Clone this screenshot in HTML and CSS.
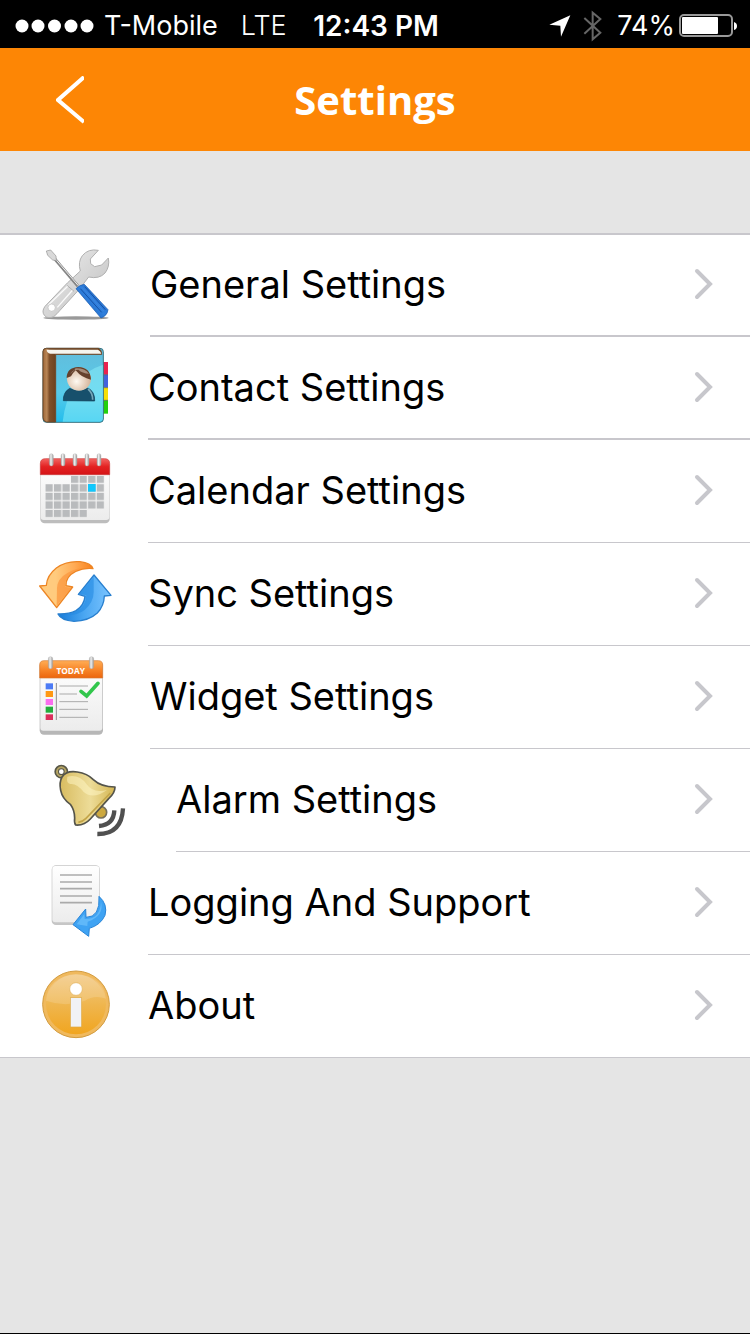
FILE: index.html
```html
<!DOCTYPE html>
<html lang="en">
    <head>
        <title>Settings</title>
        <meta charset="UTF-8">
        <meta name="viewport" content="width=device-width">
        <link rel="stylesheet" href="styles.css">
    </head>
    <body>
        <div class="status">
            <div class="carrier">
                <svg class="signal" viewBox="0 0 80 14" aria-hidden="true">
                    <circle cx="7" cy="7" r="6.5"/>
                    <circle cx="23" cy="7" r="6.5"/>
                    <circle cx="39.500" cy="7" r="6.5"/>
                    <circle cx="56" cy="7" r="6.5"/>
                    <circle cx="72" cy="7" r="6.5"/>
                </svg>
                <span>T-Mobile</span>
                <span class="network">LTE</span>
            </div>
            <div class="time">12:43 PM</div>
            <div class="power">
                <svg class="location" viewBox="0 0 66 66" aria-hidden="true">
                    <path d="M64 1 L36 65 L34 32 L1 29 Z"/>
                </svg>
                <svg class="bluetooth" viewBox="0 0 60 96" aria-hidden="true">
                    <path d="M4 24 L52 68 L29 88 V8 L52 27 L4 71"/>
                </svg>
                <span class="percent">74%</span>
                <svg class="battery" viewBox="0 0 58 24" aria-hidden="true">
                    <rect class="case" x="1" y="1" width="52" height="21" rx="4"/>
                    <rect x="3" y="3" width="36" height="17" rx="1"/>
                    <path d="M55 8 q3 1 3 4 q0 3 -3 4 Z"/>
                </svg>
            </div>
        </div>
        <header class="bar">
            <button class="back" type="button" aria-label="Back">
                <svg viewBox="0 0 28 48" aria-hidden="true"><path d="M28 1 L2 24 L28 46"/></svg>
            </button>
            <h1>Settings</h1>
        </header>
        <nav class="list">
            <a class="row wide" href="#general">
                <!-- wrench and screwdriver -->
                <svg class="icon" viewBox="0 -3 300 300" aria-hidden="true">
                    <defs>
                        <linearGradient id="steel" x1="0" y1="0" x2="1" y2="1">
                            <stop offset="0" stop-color="#f0f0f0"/>
                            <stop offset="1" stop-color="#bcbcbc"/>
                        </linearGradient>
                        <linearGradient id="handle" x1="0" y1="1" x2="1" y2="0">
                            <stop offset="0" stop-color="#0f57b4"/>
                            <stop offset=".5" stop-color="#2f7fdc"/>
                            <stop offset="1" stop-color="#1a63c2"/>
                        </linearGradient>
                    </defs>
                    <ellipse cx="138" cy="246" rx="98" ry="5" fill="#999"/>
                    <path d="M205 43 Q175 37 157 59 Q143 78 151 105 L112 141 L45 211 Q34 226 43 238 Q53 250 71 242 Q81 234 90 223 L145 163 L176 123 Q208 130 225 111 Q240 92 235 66 L215 87 L194 92 L182 83 L181 69 Z" fill="url(#steel)" stroke="#b0b0b0" stroke-width="3" stroke-linejoin="round"/>
                    <path d="M114 150 L55 207 M128 162 L82 214" fill="none" stroke="#fafafa" stroke-width="4"/>
                    <path d="M111 148 L132 166" stroke="#999" stroke-width="2"/>
                    <circle cx="65" cy="215" r="11" fill="#fff" stroke="#bbb" stroke-width="2"/>
                    <path d="M72 66 L144 151" stroke="#858585" stroke-width="9"/>
                    <path d="M72 64 L145 149" stroke="#eee" stroke-width="3"/>
                    <path d="M49 45 L62 42 L78 60 L79 74 L68 72 L53 58 Z" fill="#d9d9d9" stroke="#929292" stroke-width="2"/>
                    <path d="M138 158 Q150 146 163 145 L234 221 Q232 239 213 246 Z" fill="url(#handle)" stroke="#1557ad" stroke-width="2"/>
                    <path d="M151 158 L215 229 M164 152 L226 221" stroke="#1550a6" stroke-width="3"/>
                    <path d="M156 154 L221 225" stroke="#4088e0" stroke-width="3"/>
                </svg>
                <span class="label">General Settings</span>
                <svg class="chevron" viewBox="0 0 20 32" aria-hidden="true"><path d="M3 3 L16 16 L3 29"/></svg>
            </a>
            <a class="row" href="#contact">
                <!-- address book -->
                <svg class="icon" viewBox="0 -3 300 300" aria-hidden="true">
                    <defs>
                        <linearGradient id="cover" x1="0" y1="0" x2="0" y2="1">
                            <stop offset="0" stop-color="#62bcdb"/>
                            <stop offset=".6" stop-color="#58cbea"/>
                            <stop offset="1" stop-color="#22bdec"/>
                        </linearGradient>
                        <linearGradient id="spine" x1="39" y1="0" x2="77" y2="0" gradientUnits="userSpaceOnUse">
                            <stop offset="0" stop-color="#a0693a"/>
                            <stop offset=".3" stop-color="#b98656"/>
                            <stop offset=".5" stop-color="#80502a"/>
                            <stop offset="1" stop-color="#6c421f"/>
                        </linearGradient>
                        <radialGradient id="face" cx=".4" cy=".6" r=".7">
                            <stop offset="0" stop-color="#fffaf2"/>
                            <stop offset="1" stop-color="#cda789"/>
                        </radialGradient>
                    </defs>
                    <rect x="216" y="72" width="18" height="38" fill="#e9234f"/>
                    <rect x="216" y="110" width="18" height="39" fill="#4362dc"/>
                    <rect x="216" y="149" width="18" height="38" fill="#f6df06"/>
                    <rect x="216" y="187" width="18" height="40" fill="#24cf0d"/>
                    <path d="M219 110 H234 M219 149 H234 M219 187 H234" stroke="#555" stroke-width="2"/>
                    <rect x="39" y="31" width="181" height="222" rx="10" fill="url(#cover)" stroke="#3d7481" stroke-width="3"/>
                    <path d="M219 80 Q114 113 98 251 H209 Q219 250 219 240 Z" fill="#8df0fa" opacity=".5"/>
                    <path d="M39 40 Q39 31 50 31 H206 Q215 36 215 49 H77 V252 H50 Q39 250 39 238 Z" fill="url(#spine)" stroke="#714929" stroke-width="3"/>
                    <path d="M50 35 H204 Q212 40 214 47 H61 Q50 44 50 35 Z" fill="#f6f5ef"/>
                    <path d="M100 188 Q99 163 119 151 Q147 165 174 150 Q195 161 194 189 Z" fill="#17506c" stroke="#124057" stroke-width="2"/>
                    <path d="M174 153 Q188 164 188 185" fill="none" stroke="#76a6b6" stroke-width="5"/>
                    <ellipse cx="147" cy="123" rx="36" ry="35" fill="url(#face)"/>
                    <path d="M110 120 Q110 89 145 87 Q181 88 183 125 Q155 120 137 97 Q127 106 123 115 Z" fill="#65412c"/>
                    <path d="M120 109 Q126 98 134 95 Q134 91 140 91 Q165 91 177 107 Q157 106 145 95 L133 97 Z" fill="#a58b78"/>
                </svg>
                <span class="label">Contact Settings</span>
                <svg class="chevron" viewBox="0 0 20 32" aria-hidden="true"><path d="M3 3 L16 16 L3 29"/></svg>
            </a>
            <a class="row" href="#calendar">
                <!-- month calendar -->
                <svg class="icon" viewBox="0 0 300 300" aria-hidden="true">
                    <defs>
                        <linearGradient id="red" x1="0" y1="0" x2="0" y2="1">
                            <stop offset="0" stop-color="#f36461"/>
                            <stop offset=".5" stop-color="#e32222"/>
                            <stop offset="1" stop-color="#d51316"/>
                        </linearGradient>
                        <linearGradient id="paper" x1="0" y1="0" x2="0" y2="1">
                            <stop offset="0" stop-color="#ffffff"/>
                            <stop offset="1" stop-color="#ececec"/>
                        </linearGradient>
                        <linearGradient id="ring" x1="0" y1="0" x2="1" y2="0">
                            <stop offset="0" stop-color="#a9a9a9"/>
                            <stop offset=".4" stop-color="#efefef"/>
                            <stop offset="1" stop-color="#999"/>
                        </linearGradient>
                        <pattern id="days" x="46" y="107" width="25.700" height="25.700" patternUnits="userSpaceOnUse">
                            <rect width="22" height="22" fill="#b9bbbd"/>
                        </pattern>
                    </defs>
                    <rect x="31" y="62" width="208" height="188" rx="13" fill="#bdbdbd"/>
                    <rect x="32" y="64" width="206" height="176" rx="9" fill="url(#paper)"/>
                    <path d="M31 104 V71 Q31 56 46 56 H224 Q239 56 239 71 V104 Z" fill="url(#red)" stroke="#cb3b3b" stroke-width="2"/>
                    <path d="M122 107 H223 V206 H171 V232 H46 V132 H122 Z" fill="url(#days)"/>
                    <rect x="174" y="132" width="23" height="23" fill="#10c7fc"/>
                    <g fill="url(#ring)" stroke="#aaa">
                        <rect x="58" y="41" width="12" height="37" rx="6"/>
                        <rect x="93" y="41" width="12" height="37" rx="6"/>
                        <rect x="129" y="41" width="12" height="37" rx="6"/>
                        <rect x="165" y="41" width="12" height="37" rx="6"/>
                        <rect x="201" y="41" width="12" height="37" rx="6"/>
                    </g>
                </svg>
                <span class="label">Calendar Settings</span>
                <svg class="chevron" viewBox="0 0 20 32" aria-hidden="true"><path d="M3 3 L16 16 L3 29"/></svg>
            </a>
            <a class="row" href="#sync">
                <!-- two turning arrows -->
                <svg class="icon" viewBox="0 -6 300 300" aria-hidden="true">
                    <defs>
                        <linearGradient id="warm" x1="0" y1="0" x2="1" y2="0">
                            <stop offset=".3" stop-color="#ffcb7e"/>
                            <stop offset=".65" stop-color="#ffab55"/>
                            <stop offset="1" stop-color="#f98019"/>
                        </linearGradient>
                        <linearGradient id="cool" x1="0" y1="0" x2="1" y2="0">
                            <stop offset="0" stop-color="#177bd9"/>
                            <stop offset=".5" stop-color="#4ba7f2"/>
                            <stop offset="1" stop-color="#7bc4ff"/>
                        </linearGradient>
                    </defs>
                    <path d="M189 71 Q183 54 150 50 Q108 47 79 69 Q51 91 49 121 L29 123 L80 188 L128 126 L108 122 Q107 94 137 79 Q162 68 189 71 Z" fill="url(#warm)" stroke="#ed8524" stroke-width="4" stroke-linejoin="round"/>
                    <path d="M187 69 Q143 65 112 84 Q82 101 81 129 L80 183 L123 129 L105 125 Q104 94 136 77 Q161 66 187 69 Z" fill="#fb963d" opacity=".7"/>
                    <path d="M84 207 Q93 226 132 229 Q176 228 202 204 Q222 183 223 153 L243 151 L192 90 L145 148 L165 154 Q162 182 138 197 Q117 208 84 207 Z" fill="url(#cool)" stroke="#287fcf" stroke-width="4" stroke-linejoin="round"/>
                    <path d="M88 209 Q134 217 164 195 Q191 171 191 142 V96 L149 146 L169 151 Q167 185 140 199 Q120 210 88 209 Z" fill="#248ae2" opacity=".6"/>
                </svg>
                <span class="label">Sync Settings</span>
                <svg class="chevron" viewBox="0 0 20 32" aria-hidden="true"><path d="M3 3 L16 16 L3 29"/></svg>
            </a>
            <a class="row wide" href="#widget">
                <!-- today list -->
                <svg class="icon" viewBox="0 -6 300 300">
                    <defs>
                        <linearGradient id="orange" x1="0" y1="0" x2="0" y2="1">
                            <stop offset="0" stop-color="#ffad55"/>
                            <stop offset=".5" stop-color="#f8872b"/>
                            <stop offset="1" stop-color="#ec650d"/>
                        </linearGradient>
                    </defs>
                    <rect x="29" y="41" width="190" height="219" rx="13" fill="#b7b7b7"/>
                    <rect x="31" y="43" width="186" height="205" rx="9" fill="url(#paper)"/>
                    <path d="M29 90 V51 Q29 38 42 38 H205 Q218 38 218 51 V90 Z" fill="url(#orange)" stroke="#d67a34" stroke-width="2"/>
                    <g fill="url(#ring)" stroke="#aaa">
                        <rect x="55" y="26" width="13" height="36" rx="6"/>
                        <rect x="178" y="26" width="13" height="36" rx="6"/>
                    </g>
                    <text class="today" x="122" y="79" text-anchor="middle">TODAY</text>
                    <rect x="47" y="106" width="22" height="18" fill="#4c7bf5"/>
                    <rect x="47" y="129" width="22" height="18" fill="#ff9813"/>
                    <rect x="47" y="153" width="22" height="18" fill="#fa6eee"/>
                    <rect x="47" y="176" width="22" height="18" fill="#22ad3b"/>
                    <rect x="47" y="199" width="22" height="17" fill="#db2d5c"/>
                    <path d="M79 105 V216" stroke="#8d8d8d" stroke-width="3"/>
                    <path d="M88 114 H174 M88 138 H141 M88 161 H174 M88 184 H174 M88 208 H174" stroke="#aaa" stroke-width="3"/>
                    <path d="M153 130 L170 144 L204 106" fill="none" stroke="#32c64c" stroke-width="11" stroke-linecap="round"/>
                </svg>
                <span class="label">Widget Settings</span>
                <svg class="chevron" viewBox="0 0 20 32" aria-hidden="true"><path d="M3 3 L16 16 L3 29"/></svg>
            </a>
            <a class="row alarm" href="#alarm">
                <!-- ringing bell -->
                <svg class="icon" viewBox="-30 -6 300 300" aria-hidden="true">
                    <defs>
                        <linearGradient id="brass" x1="0" y1="0" x2="1" y2="0">
                            <stop offset="0" stop-color="#d8bc60"/>
                            <stop offset=".55" stop-color="#eddc98"/>
                            <stop offset="1" stop-color="#d4b653"/>
                        </linearGradient>
                    </defs>
                    <circle cx="64" cy="62" r="14" fill="none" stroke="#575646" stroke-width="14"/>
                    <circle cx="64" cy="62" r="13" fill="none" stroke="#b5a463" stroke-width="6"/>
                    <circle cx="183" cy="184" r="17" fill="#cda93f" stroke="#77705a" stroke-width="5"/>
                    <path d="M66 78 Q79 58 112 63 Q142 67 160 86 Q183 108 225 108 Q225 126 206 143 L151 204 Q133 224 107 222 Q102 215 104 201 Q104 178 91 160 Q67 143 62 118 Q57 94 66 78 Z" fill="url(#brass)" stroke="#54544b" stroke-width="5" stroke-linejoin="round"/>
                    <path d="M82 77 Q118 69 140 100 Q159 128 201 117 Q159 147 131 123 Q111 97 91 99 Q78 96 82 77 Z" fill="#fff7c8" opacity=".5"/>
                    <path d="M211 126 L138 202 Q128 212 115 214" fill="none" stroke="#c4a548" stroke-width="5"/>
                    <path d="M177 225 Q221 221 223 178 M172 249 Q245 250 249 172" fill="none" stroke="#505050" stroke-width="13"/>
                </svg>
                <span class="label">Alarm Settings</span>
                <svg class="chevron" viewBox="0 0 20 32" aria-hidden="true"><path d="M3 3 L16 16 L3 29"/></svg>
            </a>
            <a class="row" href="#logging">
                <!-- page with an arrow -->
                <svg class="icon" viewBox="0 -9 300 300" aria-hidden="true">
                    <rect x="65" y="31" width="145" height="179" rx="13" fill="#c6c6c6"/>
                    <rect x="67" y="33" width="141" height="169" rx="9" fill="url(#paper)"/>
                    <path d="M90 60 H186 M90 81 H186 M90 101 H186 M90 123 H186 M90 143 H186" stroke="#aaa" stroke-width="5"/>
                    <path d="M207 124 Q234 148 225 181 Q212 210 178 220 L176 244 L129 209 L167 162 L168 187 Q211 187 207 124 Z" fill="#3fa3f3" stroke="#2784d8" stroke-width="3" stroke-linejoin="round"/>
                    <path d="M213 140 Q224 182 173 200 L172 213 L140 208 L163 177 L164 192 Q211 193 213 140 Z" fill="#6fc0fb" opacity=".7"/>
                </svg>
                <span class="label">Logging And Support</span>
                <svg class="chevron" viewBox="0 0 20 32" aria-hidden="true"><path d="M3 3 L16 16 L3 29"/></svg>
            </a>
            <a class="row" href="#about">
                <!-- info badge -->
                <svg class="icon" viewBox="0 -9 300 300" aria-hidden="true">
                    <defs>
                        <linearGradient id="amber" x1="0" y1="0" x2="0" y2="1">
                            <stop offset="0" stop-color="#f2c984"/>
                            <stop offset=".5" stop-color="#efb64f"/>
                            <stop offset="1" stop-color="#f1a51f"/>
                        </linearGradient>
                    </defs>
                    <circle cx="138" cy="139" r="100" fill="#f0b95d" stroke="#d29b3f" stroke-width="3"/>
                    <circle cx="138" cy="139" r="90" fill="url(#amber)"/>
                    <path d="M48 128 Q54 56 138 49 Q220 54 228 122 Q193 110 165 128 Q108 149 48 128 Z" fill="#fff" opacity=".15"/>
                    <circle cx="138" cy="93" r="19" fill="#fff" stroke="#e1b25e" stroke-width="2"/>
                    <rect x="121" y="119" width="34" height="88" fill="#f1f2f5" stroke="#dda944" stroke-width="2"/>
                </svg>
                <span class="label">About</span>
                <svg class="chevron" viewBox="0 0 20 32" aria-hidden="true"><path d="M3 3 L16 16 L3 29"/></svg>
            </a>
        </nav>
    </body>
</html>
```
FILE: styles.css
```css
* {
    box-sizing: border-box;
}
body {
    margin: 0;
    min-height: 100vh;
    background-color: #e5e5e5;
    border-bottom: 1px solid black;
    font-family: Inter, "Liberation Sans", sans-serif;
}
svg {
    display: block;
    flex: none;
}
.status {
    display: grid;
    grid-template-columns: 1fr auto 1fr;
    align-items: center;
    height: 48px;
    padding: 3px 13px 0 15px;
    background-color: black;
    color: white;
    font-size: 27px;
    line-height: 32px;
}
.status svg {
    fill: white;
}
.carrier, .power {
    display: flex;
    align-items: center;
}
.signal {
    width: 80px;
    height: 14px;
    margin-right: 9px;
}
.network {
    margin-left: 23px;
    font-weight: 300;
}
.time {
    font-size: 28px;
    font-weight: 600;
}
.power {
    justify-content: flex-end;
}
.location {
    width: 22px;
    height: 22px;
}
.status .bluetooth {
    width: 20px;
    height: 32px;
    margin: 0 14px 0 12px;
    fill: none;
    stroke: #666;
    stroke-width: 6;
}
.percent {
    margin-right: 4px;
}
.battery {
    width: 58px;
    height: 24px;
}
.battery .case {
    fill: none;
    stroke: #999;
    stroke-width: 2;
}
.bar {
    display: grid;
    grid-template-columns: 1fr auto 1fr;
    align-items: center;
    height: 103px;
    background-color: #fd8605;
    color: white;
}
.back {
    justify-self: start;
    margin-left: 40px;
    padding: 16px;
    border: 0;
    background: none;
    cursor: pointer;
}
.back svg {
    width: 28px;
    height: 48px;
    fill: none;
    stroke: white;
    stroke-width: 4;
}
h1 {
    margin: 0;
    font-family: "Open Sans", sans-serif;
    font-size: 40px;
    font-weight: 700;
}
.list {
    margin-top: 82px;
    border-top: 2px solid #c8c7cc;
    border-bottom: 1px solid #c8c7cc;
    background-color: white;
}
.row {
    display: grid;
    grid-template-columns: 118px 1fr auto;
    height: 103px;
    padding-left: 30px;
    color: black;
    font-size: 38px;
    text-decoration: none;
}
.row:first-child, .row:last-child {
    height: 102px;
}
.row.wide {
    grid-template-columns: 120px 1fr auto;
}
.row.alarm {
    grid-template-columns: 146px 1fr auto;
}
.icon {
    width: 100px;
    height: 100px;
}
.today {
    fill: white;
    font: 700 25px "Open Sans", sans-serif;
}
.label {
    display: flex;
    align-items: center;
    padding-bottom: 2px;
    border-bottom: 1px solid #c8c7cc;
}
.chevron {
    box-sizing: content-box;
    width: 20px;
    height: 32px;
    padding: 34px 36px 36px 0;
    border-bottom: 1px solid #c8c7cc;
    fill: none;
    stroke: #c7c7cc;
    stroke-width: 4;
    stroke-linecap: round;
}
.row:nth-child(-n+2) .label, .row:nth-child(-n+2) .chevron {
    border-bottom-width: 2px;
}
.row:last-child .label, .row:last-child .chevron {
    border-bottom: 0;
}
.row:first-child .chevron {
    padding-top: 33px;
    padding-bottom: 35px;
}
.row:nth-child(2) .chevron {
    padding-bottom: 35px;
}
```
